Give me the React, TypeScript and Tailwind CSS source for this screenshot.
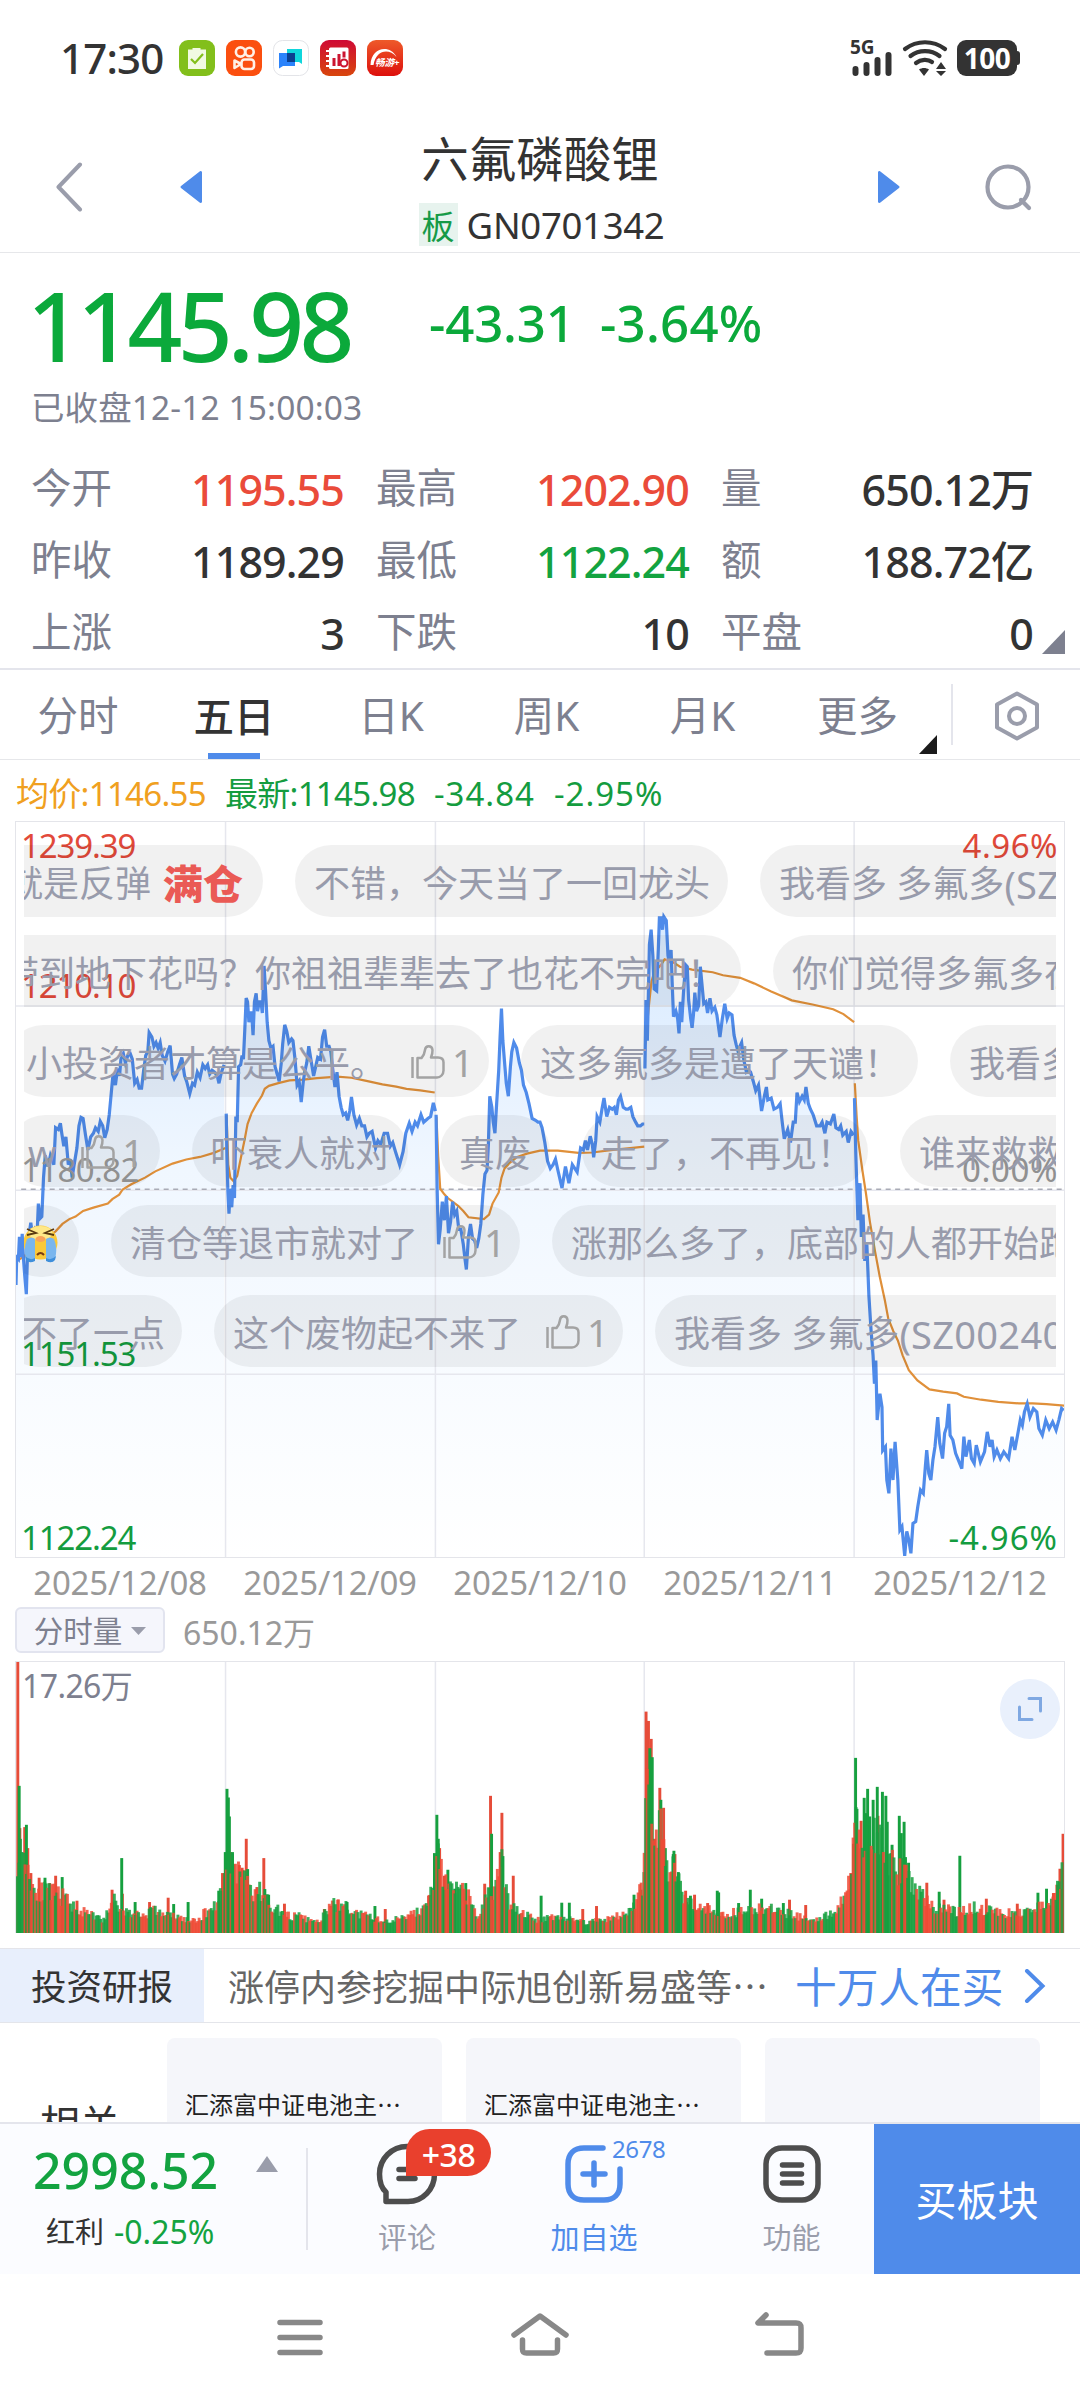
import { Fragment } from "react";
import clsx from "clsx";

type Quote = { label: string; value: string; tone?: "up" | "down" };

type Bullet = {
  text?: string;
  code?: string;
  tag?: string;
  likes?: number;
  cry?: boolean;
  width: number;
};

type BulletRow = { shift: number; items: Bullet[] };

const QUOTES: Quote[] = [
  { label: "今开", value: "1195.55", tone: "up" },
  { label: "最高", value: "1202.90", tone: "up" },
  { label: "量", value: "650.12万" },
  { label: "昨收", value: "1189.29" },
  { label: "最低", value: "1122.24", tone: "down" },
  { label: "额", value: "188.72亿" },
  { label: "上涨", value: "3" },
  { label: "下跌", value: "10" },
  { label: "平盘", value: "0" },
];

const DATES = ["2025/12/08", "2025/12/09", "2025/12/10", "2025/12/11", "2025/12/12"];

// shift is how far the row has scrolled past the left edge of the chart
const BULLETS: BulletRow[] = [
  {
    shift: -36,
    items: [
      { text: "就是反弹", tag: "满仓", width: 275 },
      { text: "不错，今天当了一回龙头", width: 433 },
      { text: "我看多 多氟多", code: "(SZ002407)", width: 480 },
    ],
  },
  {
    shift: -40,
    items: [
      { text: "带到地下花吗？你祖祖辈辈去了也花不完吧！", width: 757 },
      { text: "你们觉得多氟多在", width: 330 },
    ],
  },
  {
    shift: -17,
    items: [
      { text: "小投资者才算是公平。", likes: 1, width: 482 },
      { text: "这多氟多是遭了天谴！", width: 397 },
      { text: "我看多 多氟多", width: 300 },
    ],
  },
  {
    shift: -15,
    items: [
      { text: "w", likes: 1, width: 151 },
      { text: "吓衰人就对", width: 216 },
      { text: "真废", width: 110 },
      { text: "走了，不再见！", width: 286 },
      { text: "谁来救救", width: 190 },
    ],
  },
  {
    shift: -20,
    items: [
      { cry: true, width: 75 },
      { text: "清仓等退市就对了", likes: 1, width: 409 },
      { text: "涨那么多了，底部的人都开始跑", width: 560 },
    ],
  },
  {
    shift: -22,
    items: [
      { text: "不了一点", width: 180 },
      { text: "这个废物起不来了", likes: 1, width: 409 },
      { text: "我看多 多氟多", code: "(SZ002407)", width: 480 },
    ],
  },
];

const PRICE = [
  "45,1310 47,1235 52,1240 55,1180 60,1235 63,1172 66,1230 70,1280 75,1335 78,1240 82,1180 88,1142 95,1190 100,1165 106,1180 110,1090 115,1130 120,1125 125,1020 130,960 138,990 145,960 155,985 160,885 168,890 174,873 178,900 184,935 190,910 197,985 203,970 208,1020 214,985 222,940 228,880 234,857 240,860 247,905 254,945 262,910 270,900 276,885 284,895 290,868 297,880 303,912 310,890 316,850 322,790 327,740 334,770 340,725 346,745 350,700 357,685 363,710 370,690 377,685 383,700 390,765 397,755 403,778 410,778 416,730 422,690 428,680 432,628 440,640 446,665 452,655 458,670 464,655 470,690 478,705 486,680 493,663 500,740 505,752 512,740 520,715 527,695 535,745 541,760 550,793 558,765 564,770 572,735 580,750 588,715 595,725 602,715 608,740 615,730 622,735 630,745 635,765 642,735 650,715",
  "656,847 658,960 661,1060 664,1117 668,1050 672,1100 676,1040 680,1075 684,855 688,870 692,720 698,715 702,690 706,700 710,620 714,535 718,545 722,600 726,575 730,575 734,635 738,545 743,522 747,570 752,545 757,545 761,575 766,448 770,510 775,600 780,650 786,670 792,665 798,720 804,740 810,760 816,710 820,660 826,607 832,625 838,655 846,645 850,650 856,700 862,770 868,760 874,816 880,760 884,735 890,710 896,665 902,700 910,745 916,720 922,695 930,700 936,640 942,620 948,665 955,665 960,680 966,730 972,775 978,735 984,800 990,830 996,850 1003,845 1009,865 1015,840 1020,802 1027,850 1035,878 1043,860 1050,880 1058,880 1065,910 1072,900 1080,895 1090,940 1097,920 1105,930 1115,900 1125,900 1133,935 1140,925 1148,950 1160,985 1170,950 1178,900 1188,873 1196,895 1205,870 1212,880 1222,850 1230,870 1242,860 1250,855 1258,818 1264,840",
  "1266,850 1269,1050 1273,1200 1278,1160 1284,1085 1290,1135 1296,1070 1302,1170 1308,1140 1314,1085 1320,1120 1326,1110 1332,1160 1338,1160 1345,1200 1350,1240 1354,1268 1360,1180 1366,1145 1372,1185 1378,1190 1384,1210 1390,1185 1396,1145 1402,1065 1408,1010 1414,1000 1418,930 1422,800 1428,830 1432,870 1437,900 1442,820 1448,730 1452,640 1456,563 1460,650 1466,720 1470,765 1476,800 1482,720 1486,680 1492,655 1500,670 1508,710 1514,730 1520,770 1528,790 1536,820 1545,860 1555,865 1562,870 1568,870 1574,885 1582,925 1590,975 1598,995 1606,985 1613,970 1620,1000 1632,1048 1642,990 1652,1035 1662,985 1676,1005 1686,940 1694,945 1700,920 1706,945 1714,908 1720,930 1724,965 1730,920 1734,855 1742,870 1748,835 1754,805 1762,855 1770,830 1778,835 1784,830 1790,850 1796,810 1802,800 1810,830 1818,835 1824,835 1832,830 1838,855 1846,870 1852,880 1860,880 1866,875 1871,875",
  "1873,725 1876,540 1880,650 1884,480 1886,390 1891,350 1896,420 1900,510 1907,515 1912,400 1915,318 1920,318 1924,350 1928,315 1935,325 1940,420 1944,440 1949,405 1952,490 1956,585 1963,570 1968,590 1972,630 1976,545 1980,600 1985,520 1991,445 1996,450 2000,540 2006,590 2010,615 2014,580 2018,520 2023,570 2029,555 2034,450 2040,510 2044,550 2050,545 2055,575 2062,535 2068,570 2076,560 2082,580 2091,640 2098,590 2105,550 2112,590 2118,575 2126,580 2132,635 2138,660 2144,680 2149,665 2154,655 2160,700 2168,735 2175,730 2180,735 2188,760 2195,785 2203,770 2212,840 2220,800 2226,775 2230,810 2240,805 2248,835 2258,830 2266,820 2272,870 2278,915 2288,890 2296,925 2304,870 2310,870 2315,790 2322,815 2330,800 2336,810 2341,775 2348,820 2354,835 2362,850 2372,880 2382,880 2388,870 2396,900 2402,870 2412,875 2422,848 2428,885 2436,890 2442,880 2448,905 2458,895 2464,925 2472,895 2480,905",
  "2482,805 2486,960 2492,1135 2498,1035 2502,1180 2507,1120 2512,1245 2518,1200 2524,1340 2530,1430 2536,1500 2540,1577 2544,1514 2548,1675 2556,1604 2562,1640 2564,1757 2572,1747 2576,1837 2582,1873 2588,1752 2594,1837 2600,1734 2608,1837 2614,1972 2620,1963 2628,2042 2634,1976 2640,1999 2646,2035 2652,1954 2660,1949 2666,1909 2674,1864 2682,1873 2688,1801 2692,1756 2698,1819 2704,1837 2710,1783 2716,1747 2724,1667 2730,1738 2738,1779 2744,1711 2750,1693 2756,1631 2760,1716 2768,1729 2776,1765 2784,1783 2794,1806 2800,1720 2806,1774 2816,1729 2822,1779 2830,1792 2836,1743 2848,1788 2860,1761 2868,1707 2876,1747 2882,1729 2888,1774 2896,1756 2906,1779 2916,1761 2930,1779 2940,1720 2948,1756 2956,1716 2964,1675 2970,1689 2976,1653 2984,1631 2992,1667 3002,1644 3012,1653 3018,1698 3028,1716 3038,1675 3048,1698 3058,1680 3068,1702 3076,1675 3084,1644 3090,1649",
];

const AVERAGE = [
  "48,1245 65,1235 160,1165 180,1145 200,1132 218,1125 240,1110 270,1101 312,1090 325,1078 345,1066 355,1052 380,1038 420,1020 450,1003 500,982 540,971 580,964 620,953 654,940",
  "657,850 662,985 668,1020 678,1030 688,1015 700,960 710,915 718,875 730,845 745,820 760,798 768,780 780,772 810,764 840,757 880,755 920,751 950,749 978,747 1020,750 1060,758 1110,768 1150,774 1180,780 1220,784 1262,790",
  "1267,855 1272,960 1278,1050 1290,1065 1300,1075 1330,1096 1345,1110 1360,1127 1405,1132 1420,1120 1430,1090 1448,1060 1456,1020 1465,995 1480,980 1500,965 1530,955 1568,947 1620,947 1680,953 1720,952 1780,945 1830,940 1871,936",
  "1874,660 1884,560 1892,490 1900,465 1920,445 1930,430 1955,438 1975,450 2010,458 2070,465 2100,473 2150,480 2190,495 2240,517 2300,541 2360,552 2420,565 2450,578 2475,596 2481,600",
  "2483,765 2488,850 2493,920 2505,1000 2515,1060 2527,1140 2542,1220 2556,1290 2570,1350 2580,1400 2595,1435 2608,1460 2622,1500 2640,1540 2665,1568 2700,1592 2740,1598 2780,1603 2800,1612 2850,1620 2900,1626 2960,1630 3000,1630 3040,1632 3092,1636",
];

const GRID_X = [654, 1264, 1871, 2481];

// running level of the volume bars, x then top
const LEVEL: [number, number][] = [
  [45, 640], [70, 620], [90, 730], [110, 745], [130, 750], [150, 755], [180, 765], [200, 785], [230, 810], [260, 822],
  [305, 842], [315, 780], [325, 770], [340, 800], [370, 815], [420, 825], [440, 805], [480, 822], [520, 832], [570, 845],
  [590, 820], [620, 795], [640, 760], [652, 700], [668, 640], [690, 690], [715, 700], [730, 755], [750, 745], [790, 795],
  [830, 825], [870, 828], [910, 845], [930, 840], [960, 790], [1000, 795], [1020, 815], [1060, 825], [1100, 838], [1130, 848],
  [1160, 825], [1200, 820], [1235, 800], [1256, 740], [1270, 640], [1285, 705], [1310, 750], [1340, 745], [1360, 770], [1390, 835],
  [1410, 770], [1440, 730], [1455, 650], [1465, 740], [1480, 785], [1510, 810], [1560, 840], [1600, 825], [1700, 845], [1760, 835],
  [1820, 820], [1850, 780], [1868, 720], [1872, 500], [1890, 420], [1900, 620], [1915, 560], [1925, 580], [1935, 700], [1950, 650],
  [1970, 700], [1980, 765], [2000, 780], [2050, 800], [2110, 822], [2160, 810], [2200, 800], [2260, 810], [2300, 820], [2350, 838],
  [2400, 825], [2440, 790], [2470, 710], [2485, 560], [2500, 590], [2560, 590], [2580, 640], [2600, 690], [2620, 680], [2640, 700],
  [2650, 735], [2680, 765], [2700, 785], [2720, 812], [2740, 790], [2780, 815], [2830, 800], [2900, 815], [2950, 820], [3000, 805],
  [3040, 785], [3065, 765], [3080, 720], [3092, 660],
];

const RED_SPIKES: [number, number][] = [
  [50, 66], [56, 565], [70, 562], [79, 625], [88, 700], [112, 714], [143, 730], [160, 708], [222, 783], [324, 750], [354, 762],
  [433, 787], [487, 774], [645, 700], [668, 637], [694, 676], [702, 684], [714, 597], [745, 742], [765, 655], [825, 792], [941, 808],
  [980, 780], [1118, 808], [1244, 768], [1276, 625], [1290, 708], [1407, 732], [1424, 468], [1452, 637], [1457, 519], [1490, 708],
  [1692, 808], [1732, 799], [1876, 215], [1883, 243], [1891, 297], [1901, 597], [1916, 444], [1927, 504], [1960, 643], [1991, 753],
  [2017, 765], [2055, 790], [2293, 780], [2340, 796], [2471, 700], [2501, 543], [2550, 528], [2692, 729], [2742, 780], [2865, 777],
  [2955, 792], [3060, 760], [3070, 735], [3079, 687], [3088, 582],
];

const GREEN_SPIKES: [number, number][] = [
  [54, 438], [75, 555], [129, 714], [179, 712], [352, 655], [391, 787], [503, 793], [545, 787], [634, 753], [653, 637], [658, 447],
  [662, 473], [665, 530], [674, 637], [718, 688], [768, 748], [779, 765], [1007, 787], [1088, 799], [1261, 640], [1268, 525],
  [1272, 597], [1300, 690], [1320, 747], [1352, 730], [1427, 582], [1460, 649], [1571, 768], [1631, 789], [1653, 789], [1841, 765],
  [1861, 750], [1870, 697], [1887, 325], [1894, 352], [1919, 480], [1932, 625], [1955, 643], [1957, 633], [1970, 697], [2005, 768],
  [2083, 753], [2087, 758], [2145, 790], [2179, 750], [2212, 777], [2275, 790], [2479, 612], [2485, 354], [2489, 507], [2510, 474],
  [2515, 520], [2520, 447], [2526, 530], [2536, 480], [2548, 441], [2563, 456], [2573, 468], [2577, 546], [2591, 615], [2612, 528],
  [2618, 580], [2626, 546], [2630, 652], [2639, 669], [2728, 756], [2788, 648], [3015, 759], [3040, 747],
];

function levelAt(x: number) {
  const i = Math.max(1, LEVEL.findIndex(([lx]) => lx >= x));
  const [x0, y0] = LEVEL[i - 1];
  const [x1, y1] = LEVEL[i];
  return y0 + ((x - x0) / (x1 - x0)) * (y1 - y0);
}

function buildBars() {
  const bars: { x: number; top: number; red: boolean }[] = [];
  let seed = 11;
  const next = () => {
    seed = (seed * 16807) % 2147483647;
    return seed / 2147483647;
  };
  for (let x = 49; x < 3088; x += 4.4) {
    const full = 880 - levelAt(x);
    bars.push({ x, top: 880 - full * (0.7 + next() * 0.5), red: next() > 0.5 });
  }
  return bars;
}

const BARS = buildBars();

function StatusBar() {
  return (
    <div className="flex h-[116px] shrink-0 items-center justify-between pr-[60px] pl-[60px]">
      <div className="flex items-center">
        <span className="w-[119px] text-[42px] leading-none font-medium tracking-[-0.8px] text-[#333]">17:30</span>
        <div className="flex gap-[11px]">
          <svg className="size-9" viewBox="0 0 36 36">
            <rect width="36" height="36" rx="9" fill="#82bf1b" />
            <path d="M9 9.500h4.500V8h8v1.500H27V29H9z" fill="#f1fae2" />
            <path d="m12 19 4 4 8-9" fill="none" stroke="#82bf1b" strokeWidth="2.200" />
          </svg>
          <svg className="size-9" viewBox="0 0 36 36">
            <rect width="36" height="36" rx="9" fill="#fb4f0f" />
            <g fill="none" stroke="#fff1e6" strokeWidth="2.600">
              <circle cx="14.500" cy="12" r="4.600" />
              <circle cx="23.500" cy="12" r="4.200" />
              <rect x="15.500" y="19.500" width="12.500" height="9.500" rx="3" />
              <path d="M15 24 8.500 20.500v7.500z" strokeLinejoin="round" />
            </g>
          </svg>
          <svg className="size-9" viewBox="0 0 36 36">
            <rect x=".5" y=".5" width="35" height="35" rx="9" fill="#fff" stroke="#e3e4e8" />
            <path d="M14 9h15v15l-3-2H14z" fill="#0fd6dc" />
            <path d="M6 13h16v13H10l-4 2.500z" fill="#2b83fb" />
            <path d="M14 13h8v9h-8z" fill="#0b3f8f" />
          </svg>
          <svg className="size-9" viewBox="0 0 36 36">
            <defs>
              <linearGradient id="book" x2="0" y2="1">
                <stop offset="0" stopColor="#cf0a34" />
                <stop offset="1" stopColor="#d8460d" />
              </linearGradient>
            </defs>
            <rect width="36" height="36" rx="9" fill="url(#book)" />
            <rect x="9" y="7.500" width="19.500" height="21.500" rx="1.500" fill="#fff" />
            <path d="M6 11h5M6 16h5M6 21h5M6 26h5" stroke="#fff" strokeWidth="2.200" />
            <path d="M14 18v8M19 14v12M24 11.500v6" stroke="#cc1530" strokeWidth="3" />
            <circle cx="24" cy="23" r="3.500" fill="#fff" stroke="#cc1530" strokeWidth="2" />
          </svg>
          <svg className="size-9" viewBox="0 0 36 36">
            <defs>
              <linearGradient id="play" x2="0" y2="1">
                <stop offset="0" stopColor="#ee5a2a" />
                <stop offset="1" stopColor="#dd0f0c" />
              </linearGradient>
            </defs>
            <rect width="36" height="36" rx="9" fill="url(#play)" />
            <path d="M3.500 25C4 7 23 4 29.500 17 22 8 9 10 6.500 25z" fill="#fff" />
            <text x="8" y="25.500" fontSize="9.500" fontWeight="700" fontStyle="italic" fill="#fff">
              畅游+
            </text>
          </svg>
        </div>
      </div>
      <div className="flex items-center">
        <svg className="h-9 w-11 overflow-visible" viewBox="0 0 44 36">
          <text x="0" y="14" fontSize="19" fontWeight="700" fill="#333">
            5G
          </text>
          <path d="M5.500 29v4M16.500 25v8M27.500 20v13M38.500 15v18" stroke="#333" strokeWidth="6" strokeLinecap="round" />
        </svg>
        <svg className="ml-2 h-9 w-[46px]" viewBox="0 0 46 36">
          <g fill="none" stroke="#333" strokeWidth="4.200" strokeLinecap="round">
            <path d="M3 9c12-9 28-9 40 0" />
            <path d="M8.500 16c8.500-6.500 20.500-6.500 29 0" />
            <path d="M14 23c5-4 12-4 16-1" />
          </g>
          <path d="m17 29.500c3-2 7-2 10 0l-5 6.500zM39 22l5 7H34zM34 31h10l-5 5z" fill="#333" />
        </svg>
        <div className="ml-[9px] flex items-center">
          <span className="flex h-9 w-[60px] items-center justify-center rounded-[9px] bg-[#333] text-[28px] leading-none font-bold tracking-[-0.5px] text-white">
            100
          </span>
          <span className="h-[14px] w-[3px] rounded-r-full bg-[#333]" />
        </div>
      </div>
    </div>
  );
}

function Header() {
  return (
    <header className="flex h-[137px] shrink-0 items-center justify-between border-b border-[#e6e7ea] px-[47px]">
      <div className="flex items-center pt-[5px]">
        <svg className="h-[50px] w-10" viewBox="0 0 40 50" fill="none" stroke="#9a9dab" strokeWidth="4">
          <path d="M33 2.500 11.500 25 33 47.500" strokeLinecap="round" strokeLinejoin="round" />
        </svg>
        <svg className="ml-[93px] h-8 w-[22px]" viewBox="0 0 22 32">
          <path d="M22 1v30q-1 2-3 0L1 17q-1-1 0-2L19 1q2-2 3 0z" fill="#4f8bea" />
        </svg>
      </div>
      <div className="flex flex-col items-center pt-[7px]">
        <h1 className="text-[47.500px] leading-[58px] text-[#333]">六氟磷酸锂</h1>
        <div className="mt-[15px] flex items-center gap-[9px] pl-[3px]">
          <span className="flex h-[43px] w-[39px] items-center justify-center bg-[#e7f3ee] pt-1 text-[33px] leading-none text-[#159a47]">
            板
          </span>
          <span className="pt-[3px] text-[36.500px] leading-none tracking-[-0.3px] text-[#333]">GN0701342</span>
        </div>
      </div>
      <div className="flex items-center pt-[5px]">
        <svg className="mr-[84px] h-8 w-[22px]" viewBox="0 0 22 32">
          <path d="M0 1v30q1 2 3 0l18-14q1-1 0-2L3 1q-2-2-3 0z" fill="#4f8bea" />
        </svg>
        <svg className="h-[50px] w-[49px]" viewBox="0 0 49 50" fill="none" stroke="#9a9dab" strokeWidth="4.200">
          <circle cx="24" cy="25" r="20.500" />
          <path d="m37 38 8 8" strokeLinecap="round" />
        </svg>
      </div>
    </header>
  );
}

function QuoteCell({ label, value, tone }: Quote) {
  return (
    <div className="flex h-[72px] items-center justify-between">
      <span className="text-[40.500px] leading-none text-[#7d808f]">{label}</span>
      <span
        className={clsx(
          "pt-[2px] text-[43px] leading-none font-medium tracking-[-0.900px]",
          tone === "up" && "text-[#ea4b3a]",
          tone === "down" && "text-[#13a340]",
          !tone && "text-[#333]",
        )}
      >
        {value}
      </span>
    </div>
  );
}

function Summary() {
  return (
    <section className="relative flex h-[417px] shrink-0 flex-col border-b-2 border-[#e4e5ec]">
      <div className="flex h-[130px] items-center pt-[20px] pl-[27px] text-[#0ba93b]">
        <span className="w-[402px] text-[96px] leading-none font-medium tracking-[-4.700px]">1145.98</span>
        <span className="w-[171px] pb-[6px] text-[51px] leading-none font-medium tracking-[-0.200px]">-43.31</span>
        <span className="pb-[6px] text-[51px] leading-none font-medium tracking-[0.200px]">-3.64%</span>
      </div>
      <p className="mt-[12px] pl-[31px] text-[33.500px] leading-[36px] tracking-[0.100px] text-[#7d808f]">已收盘12-12 15:00:03</p>
      <div className="mt-[27px] grid grid-cols-[313px_313px_312px] gap-x-8 pl-[31px]">
        {QUOTES.map((q) => (
          <QuoteCell key={q.label} {...q} />
        ))}
      </div>
      <svg className="absolute right-[15px] bottom-[14px] h-6 w-[23px]" viewBox="0 0 23 24">
        <path d="M23 0v24H0z" fill="#7d808f" />
      </svg>
    </section>
  );
}

function Tabs() {
  return (
    <nav className="flex h-[90px] shrink-0 items-stretch border-b border-[#e6e7ea] text-[40.500px] leading-none text-[#7d808f]">
      <span className="flex w-[156px] items-center justify-center pt-1">分时</span>
      <span className="flex w-[156px] flex-col items-center justify-end font-medium text-[#333]">
        五日
        <i className="mt-[16px] h-[6px] w-[52px] bg-[#4f8bea]" />
      </span>
      <span className="flex w-[158px] items-center justify-center pt-1">日K</span>
      <span className="flex w-[153px] items-center justify-center pt-1">周K</span>
      <span className="flex w-[159px] items-center justify-center pt-1">月K</span>
      <span className="flex w-[155px] items-center justify-end pt-1 pr-[39px]">更多</span>
      <svg className="mb-[5px] -ml-[18px] h-[19px] w-[18px] self-end" viewBox="0 0 18 19">
        <path d="M18 0v19H0z" fill="#1b1b1b" />
      </svg>
      <i className="my-[14px] ml-[14px] w-[2px] bg-[#e4e5ec]" />
      <span className="flex flex-1 items-center justify-center pt-[2px] pl-px">
        <svg className="h-[50px] w-[46px]" viewBox="0 0 46 50" fill="none" stroke="#9a9dab" strokeWidth="4">
          <path d="M23 2.500 43 13.500v23L23 47.500 3 36.500v-23z" strokeLinejoin="round" />
          <circle cx="23" cy="25" r="8" />
        </svg>
      </span>
    </nav>
  );
}

function LikeIcon() {
  return (
    <svg className="-mt-1 h-[34px] w-[34px]" viewBox="0 0 34 34" fill="none" stroke="#a3a3a3" strokeWidth="2.500" strokeLinejoin="round">
      <path d="M1.500 12v21" />
      <path d="M6.500 13h4c2-2 3-4 3.500-8 .5-5 7-5 7.500 0 .2 3-.5 5-1.500 7.500h7c3.500 0 5.500 2 5.500 5v8c0 4-3 7-6.500 7H6.500z" />
    </svg>
  );
}

function CryIcon() {
  return (
    <svg className="h-10 w-[35px]" viewBox="0 0 35 40">
      <circle cx="17.500" cy="18.500" r="17" fill="#fbc93a" />
      <ellipse cx="17.500" cy="9" rx="12" ry="7" fill="#ffe888" />
      <path d="M4 15q5-3 8 0v20q-5 6-9 0Q0 24 4 15zM23 15q4-3 8 0 4 9 1 20-4 6-9 0z" fill="#7ab6ee" />
      <path d="M2 32q5 5 10 2v3q-6 3-9-1zM33 32q-5 5-10 2v3q6 3 9-1z" fill="#3f8fdb" />
      <ellipse cx="17.500" cy="15" rx="5" ry="3" fill="#f9a25a" />
      <path d="m4 5 9 4-9 2M31 5l-9 4 9 2" fill="none" stroke="#5b3a12" strokeWidth="1.800" />
      <path d="M14 31q3.500-4 7 0" fill="none" stroke="#7a3d12" strokeWidth="2" />
    </svg>
  );
}

function BulletPill({ text, code, tag, likes, cry, width }: Bullet) {
  return (
    <div
      className="flex h-[72px] shrink-0 items-center overflow-hidden rounded-full bg-black/[0.055] pt-1.5 pl-[19px] whitespace-nowrap"
      style={{ width }}
    >
      {cry && <CryIcon />}
      <span>{text}</span>
      {code && <span className="text-[38px] tracking-[0.300px]">{code}</span>}
      {tag && <b className="ml-[12px] text-[40px] font-black text-[#ea5a55]">{tag}</b>}
      {likes && (
        <span className="ml-[25px] flex items-center gap-[7px] text-[#a3a3a3]">
          <LikeIcon />
          <span className="-mt-1 text-[38px]">{likes}</span>
        </span>
      )}
    </div>
  );
}

function PriceChart() {
  return (
    <div className="relative mx-[15px] h-[737px] shrink-0 overflow-hidden border border-[#e4e5ea]">
      <svg className="h-full w-full" viewBox="45 59 3046 1986" preserveAspectRatio="none" fill="none">
        <defs>
          <linearGradient id="area" gradientUnits="userSpaceOnUse" x1="0" x2="0" y1="300" y2="2050">
            <stop offset="0" stopColor="#d6e9ff" />
            <stop offset=".4" stopColor="#f0f7ff" />
            <stop offset="1" stopColor="#ffffff" />
          </linearGradient>
        </defs>
        {PRICE.map((line) => {
          const start = line.split(",")[0];
          const end = line.slice(line.lastIndexOf(" ") + 1).split(",")[0];
          return <polygon key={start} points={`${start},2050 ${line} ${end},2050`} fill="url(#area)" />;
        })}
        <g stroke="#e6e7ee" strokeWidth="1.500">
          {GRID_X.map((x) => (
            <path key={x} d={`M${x} 58V2050`} vectorEffect="non-scaling-stroke" />
          ))}
          <path d="M45 556H3092M45 1054H3092M45 1551H3092" vectorEffect="non-scaling-stroke" />
        </g>
        <path d="M60 1051H3092" stroke="#a9abb6" strokeWidth="1.500" strokeDasharray="5 4.500" vectorEffect="non-scaling-stroke" />
        {PRICE.map((line, i) => (
          <Fragment key={i}>
            <polyline points={AVERAGE[i]} stroke="#e0903a" strokeWidth="2.200" vectorEffect="non-scaling-stroke" />
            <polyline points={line} stroke="#4f8bea" strokeWidth="3.200" vectorEffect="non-scaling-stroke" />
          </Fragment>
        ))}
      </svg>
      <div className="absolute inset-y-0 right-[6px] left-[5px] flex flex-col justify-between pt-[6px] text-[33px] leading-[36px] tracking-[-1.100px]">
        <div className="flex h-[140px] justify-between text-[#e2493a]">
          <span>1239.39</span>
          <span className="tracking-[0.500px]">4.96%</span>
        </div>
        <div className="flex h-[184px] text-[#e2493a]">1210.10</div>
        <div className="flex h-[184px] justify-between text-[#999]">
          <span className="tracking-[-0.600px]">1180.82</span>
          <span className="tracking-[0.600px]">0.00%</span>
        </div>
        <div className="flex h-[184px] text-[#149c3f]">1151.53</div>
        <div className="flex h-[37px] justify-between text-[#149c3f]">
          <span>1122.24</span>
          <span className="tracking-[1px]">-4.96%</span>
        </div>
      </div>
      <div className="absolute top-[23px] right-2 left-2 flex flex-col gap-[18px] overflow-hidden text-[36px] leading-none text-[#989bab]">
        {BULLETS.map((row, i) => (
          <div key={i} className="flex gap-8" style={{ marginLeft: row.shift }}>
            {row.items.map((item, j) => (
              <BulletPill key={j} {...item} />
            ))}
          </div>
        ))}
      </div>
    </div>
  );
}

function VolumeChart() {
  return (
    <div className="relative mx-[15px] h-[272px] shrink-0 border-x border-t border-[#e4e5ea]">
      <svg className="h-full w-full" viewBox="45 66 3046 814" preserveAspectRatio="none">
        {GRID_X.map((x) => (
          <path key={x} d={`M${x} 66V880`} stroke="#e6e7ee" strokeWidth="1.500" vectorEffect="non-scaling-stroke" />
        ))}
        {RED_SPIKES.map(([x, y]) => (
          <rect key={x} x={x - 4} y={y} width="8.500" height={880 - y} fill="#e64c39" />
        ))}
        {GREEN_SPIKES.map(([x, y]) => (
          <rect key={x} x={x - 4} y={y} width="8.500" height={880 - y} fill="#16a03f" />
        ))}
        {BARS.map((bar) => (
          <rect
            key={bar.x}
            x={bar.x - 4}
            y={bar.top}
            width="8.500"
            height={880 - bar.top}
            fill={bar.red ? "#ee4a35" : "#16a03f"}
            opacity=".85"
          />
        ))}
      </svg>
      <span className="absolute top-[6px] left-[6px] text-[32px] leading-[36px] tracking-[-0.600px] text-[#7d808f]">17.26万</span>
      <span className="absolute top-[17px] right-[4px] flex size-[60px] items-center justify-center rounded-full bg-[#e9f0fc]">
        <svg className="size-6" viewBox="0 0 24 24" fill="none" stroke="#7fa8e2" strokeWidth="3" strokeLinecap="round">
          <path d="M11 1.500h11.500V14M1.500 10v12.500H14" />
        </svg>
      </span>
    </div>
  );
}

function NewsBar() {
  return (
    <div className="mt-[15px] flex h-[75px] shrink-0 items-center border-y border-[#e4e5ea] leading-none">
      <span className="flex h-full w-[204px] items-center justify-center bg-[#e8effc] pt-[3px] text-[35.500px] text-[#333]">投资研报</span>
      <span className="ml-[24px] w-[567px] pt-[4px] text-[36px] text-[#666]">涨停内参挖掘中际旭创新易盛等⋯</span>
      <span className="pt-[3px] text-[41.700px] text-[#4f8bea]">十万人在买</span>
      <svg className="mt-px ml-[21px] h-[34px] w-[22px]" viewBox="0 0 22 34" fill="none" stroke="#4f8bea" strokeWidth="4">
        <path d="m3 2 15.500 15L3 32" strokeLinecap="round" />
      </svg>
    </div>
  );
}

function Related() {
  return (
    <div className="flex h-[99px] shrink-0 overflow-hidden pt-[15px]">
      <span className="w-[167px] pt-[66px] pl-10 text-[40px] leading-none text-[#333]">相关</span>
      <div className="flex gap-6">
        {["汇添富中证电池主⋯", "汇添富中证电池主⋯", ""].map((name, i) => (
          <div key={i} className="h-[120px] w-[275px] rounded-lg bg-[#f5f6fa] pt-[54px] pl-[18px] text-[24px] leading-[26px] text-[#222]">
            {name}
          </div>
        ))}
      </div>
    </div>
  );
}

function BottomBar() {
  return (
    <div className="flex h-[152px] shrink-0 border-t-2 border-[#e4e5ec] bg-[#fbfcff] leading-none">
      <div className="flex w-[306px] pl-[33px]">
        <div className="flex w-[187px] flex-col pt-[20px]">
          <span className="text-[50px] leading-[52px] font-medium text-[#13a340]">2998.52</span>
          <span className="mt-[19px] flex items-center gap-[10px] pl-[13px] text-[32px] leading-[34px] whitespace-nowrap text-[#13a340]">
            <span className="text-[29px] text-[#333]">红利</span>
            -0.25%
          </span>
        </div>
        <svg className="mt-[32px] ml-[36px] h-4 w-[22px]" viewBox="0 0 22 16">
          <path d="M11 0 22 16H0z" fill="#9a9dab" />
        </svg>
      </div>
      <i className="mt-6 h-[102px] w-[2px] bg-[#e4e5ec]" />
      <div className="relative flex w-[198px] flex-col items-center pt-[19px] text-[29px] text-[#9a9dab]">
        <svg className="h-[62px] w-[62px]" viewBox="0 0 62 62" fill="none" stroke="#4d4d4d" strokeWidth="5.500" strokeLinecap="round" strokeLinejoin="round">
          <path d="M10 58.500V49C4 44 3.500 37 3.500 31a27.500 27.500 0 0 1 55 0C58.500 46 47 58.500 32 58.500z" />
          <path d="M23 26.500h16M23 35.500h16" />
        </svg>
        <span className="mt-[18px]">评论</span>
        <b className="absolute top-[5px] left-[98px] flex h-[47px] w-[85px] items-center justify-center rounded-full rounded-bl-none bg-[#e9402d] pt-[5px] text-[32px] font-medium tracking-[-0.500px] text-white">
          +38
        </b>
      </div>
      <div className="relative flex w-[176px] flex-col items-center pt-5 text-[29px] text-[#4f8bea]">
        <svg className="h-[60px] w-[60px]" viewBox="0 0 60 60" fill="none" stroke="#4f8bea" strokeWidth="5.500" strokeLinecap="round">
          <path d="M39 4H20C10 4 4 10 4 20v20c0 10 6 16 16 16h20c10 0 16-6 16-16V25" />
          <path d="M30 19v22M19 30h22" />
        </svg>
        <span className="mt-[19px]">加自选</span>
        <span className="absolute top-[13px] left-[106px] text-[24px] tracking-[-0.400px]">2678</span>
      </div>
      <div className="flex w-[192px] flex-col items-center pt-5 pl-[27px] text-[29px] text-[#9a9dab]">
        <svg className="h-[60px] w-[60px]" viewBox="0 0 60 60" fill="none" stroke="#4d4d4d" strokeWidth="5.500" strokeLinecap="round">
          <rect x="4" y="4" width="52" height="52" rx="16" />
          <path d="M20.500 21h19M20.500 30h19M20.500 39h19" />
        </svg>
        <span className="mt-[19px]">功能</span>
      </div>
      <span className="flex flex-1 items-center justify-center bg-[#4f8bea] pt-[2px] text-[41px] text-white">买板块</span>
    </div>
  );
}

function SystemNav() {
  return (
    <div className="flex h-[125px] shrink-0 items-center justify-center gap-[180px]">
      <svg className="size-[60px]" viewBox="0 0 60 60" stroke="#888" strokeWidth="5.500" strokeLinecap="round">
        <path d="M10 15.500h40M10 30.500h40M10 45.500h40" />
      </svg>
      <svg className="size-[60px]" viewBox="0 0 60 60" fill="none" stroke="#888" strokeWidth="5.500" strokeLinecap="round" strokeLinejoin="round">
        <path d="M4 28 30 9l26 19" />
        <path d="M12.500 33v9c0 3 1 4 4 4h27c3 0 4-1 4-4v-9" />
      </svg>
      <svg className="size-[60px]" viewBox="0 0 60 60" fill="none" stroke="#888" strokeWidth="5.500" strokeLinecap="round" strokeLinejoin="round">
        <path d="m16 8-8 8h38c4 0 5 1 5 5v20c0 4-1 5-5 5H17" />
      </svg>
    </div>
  );
}

export default function App() {
  return (
    <main className="flex h-[2400px] w-[1080px] flex-col overflow-hidden bg-white font-['Noto_Sans','Noto_Sans_CJK_SC',sans-serif]">
      <StatusBar />
      <Header />
      <Summary />
      <Tabs />
      <div className="flex h-[61px] shrink-0 items-center gap-[19px] pt-[5px] pl-4 text-[33px] leading-none tracking-[-0.700px] text-[#149c3f]">
        <span className="text-[#f0a020]">均价:1146.55</span>
        <span>最新:1145.98</span>
        <span className="tracking-[1px]">-34.84</span>
        <span className="tracking-[1px]">-2.95%</span>
      </div>
      <PriceChart />
      <div className="mx-[15px] flex h-[49px] shrink-0 items-center text-[33px] leading-none tracking-[-0.200px] text-[#999]">
        {DATES.map((d) => (
          <span key={d} className="w-[210px] text-center">
            {d}
          </span>
        ))}
      </div>
      <div className="flex h-[54px] shrink-0 items-start gap-[18px] pl-[15px]">
        <span className="flex h-[46px] w-[150px] items-center justify-center gap-[9px] rounded-md border-2 border-[#e2e4ef] bg-[#f5f6fc] pt-[2px] text-[29.500px] leading-none text-[#7d808f]">
          分时量
          <svg className="h-2 w-[15px]" viewBox="0 0 15 8">
            <path d="M0 0h15L7.500 8z" fill="#9a9dab" />
          </svg>
        </span>
        <span className="text-[32px] leading-[52px] text-[#999]">650.12万</span>
      </div>
      <VolumeChart />
      <NewsBar />
      <Related />
      <BottomBar />
      <SystemNav />
    </main>
  );
}
